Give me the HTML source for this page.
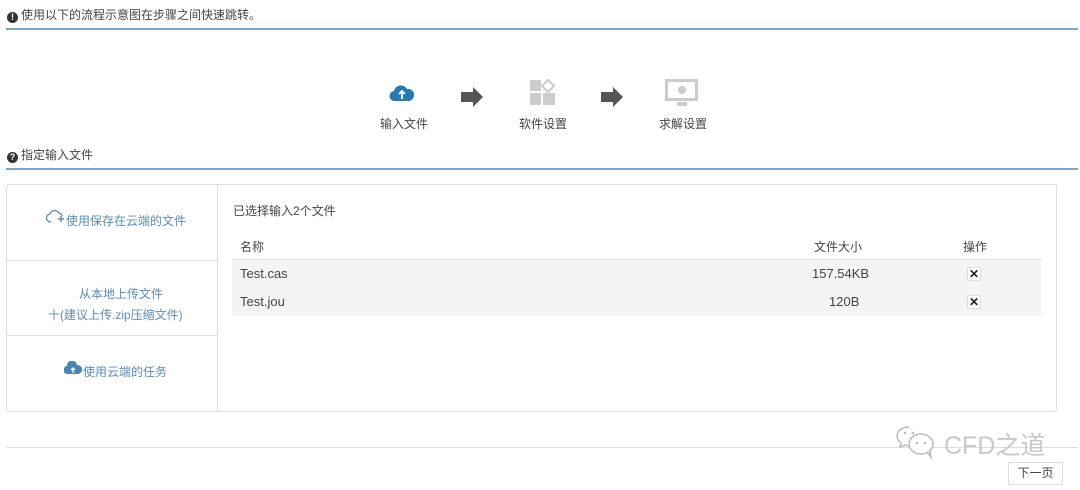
<!DOCTYPE html>
<html><head><meta charset="utf-8"><style>
*{margin:0;padding:0;box-sizing:border-box}
body{width:1080px;height:490px;background:#fff;font-family:"Liberation Sans","Noto Sans CJK SC",sans-serif;font-size:12px;color:#444;position:relative;overflow:hidden}
.a{position:absolute}
.ic{display:inline-block;width:11px;height:11px;border-radius:50%;background:#333;color:#fff;font-size:9px;line-height:11px;text-align:center;font-weight:bold;vertical-align:-1px;margin-right:3px}
.blue{color:#5b8db3}
</style></head><body>
<div class="a" style="left:7px;top:6px"><span class="ic">!</span>使用以下的流程示意图在步骤之间快速跳转。</div>
<div class="a" style="left:6px;top:28px;width:1072px;height:2px;background:#7aa7c7"></div>

<svg class="a" style="left:389px;top:82px" width="26" height="20" viewBox="0 0 26 20"><path d="M6 19a5 5 0 0 1-1-10 7 7 0 0 1 13-2 6 6 0 0 1 2 12z" fill="#2a7ab0"/><path d="M13 17V10M10 12l3-3 3 3" stroke="#fff" stroke-width="1.8" fill="none"/></svg>
<div class="a" style="left:380px;top:115px">输入文件</div>
<svg class="a" style="left:460px;top:86px" width="24" height="22"><path d="M1 6h12V1l10 10-10 10v-5H1z" fill="#555"/></svg>
<svg class="a" style="left:529px;top:79px" width="28" height="28"><rect x="1" y="1" width="11" height="11" fill="#ccc"/><rect x="1" y="14" width="11" height="12" fill="#ccc"/><rect x="14" y="14" width="12" height="12" fill="#ccc"/><path d="M19 1l6 6-6 6-6-6z" fill="none" stroke="#ccc" stroke-width="2"/></svg>
<div class="a" style="left:519px;top:115px">软件设置</div>
<svg class="a" style="left:600px;top:86px" width="24" height="22"><path d="M1 6h12V1l10 10-10 10v-5H1z" fill="#555"/></svg>
<svg class="a" style="left:665px;top:79px" width="34" height="28"><rect x="1.5" y="1.5" width="30" height="19" fill="none" stroke="#ccc" stroke-width="3"/><rect x="12" y="23" width="10" height="4" fill="#ccc"/><circle cx="17" cy="11" r="4" fill="#ccc"/></svg>
<div class="a" style="left:659px;top:115px">求解设置</div>

<div class="a" style="left:7px;top:146px"><span class="ic">?</span>指定输入文件</div>
<div class="a" style="left:6px;top:168px;width:1072px;height:2px;background:#7aa7c7"></div>

<div class="a" style="left:6px;top:184px;width:1051px;height:228px;border:1px solid #ddd;border-radius:3px"></div>
<div class="a" style="left:217px;top:185px;width:1px;height:226px;background:#ddd"></div>
<div class="a" style="left:7px;top:260px;width:210px;height:1px;background:#ddd"></div>
<div class="a" style="left:7px;top:335px;width:210px;height:1px;background:#ddd"></div>
<svg class="a" style="left:46px;top:210px" width="20" height="14"><path d="M5 12a4 4 0 0 1-1-8 5 5 0 0 1 9-1 4 4 0 0 1 3 3" fill="none" stroke="#5b8db3" stroke-width="1.3"/><path d="M12 9h6M15 6v6" stroke="#5b8db3" stroke-width="1.5"/></svg>
<div class="a blue" style="left:66px;top:212px">使用保存在云端的文件</div>
<div class="a blue" style="left:79px;top:285px">从本地上传文件</div>
<div class="a blue" style="left:48px;top:306px">十(建议上传.zip压缩文件)</div>
<svg class="a" style="left:64px;top:361px" width="18" height="14"><path d="M4 13a4 4 0 0 1-1-8 5 5 0 0 1 10-1 4 4 0 0 1 1 9z" fill="#4d86b0"/><path d="M9 12V7M7 9l2-2 2 2" stroke="#fff" stroke-width="1.3" fill="none"/></svg>
<div class="a blue" style="left:83px;top:363px">使用云端的任务</div>

<div class="a" style="left:233px;top:202px">已选择输入2个文件</div>
<div class="a" style="left:240px;top:238px">名称</div>
<div class="a" style="left:814px;top:238px">文件大小</div>
<div class="a" style="left:963px;top:238px">操作</div>
<div class="a" style="left:232px;top:259px;width:809px;height:57px;background:#f3f4f3;border-top:1px solid #ddd"></div>
<div class="a" style="left:240px;top:266px;font-size:13px">Test.cas</div>
<div class="a" style="left:812px;top:266px;font-size:13px">157.54KB</div>
<div class="a" style="left:240px;top:294px;font-size:13px">Test.jou</div>
<div class="a" style="left:829px;top:294px;font-size:13px">120B</div>
<div class="a" style="left:967px;top:267px;width:14px;height:14px;background:#fff;border:1px solid #ddd;font-size:12px;line-height:12px;text-align:center;font-weight:bold;color:#222">✕</div>
<div class="a" style="left:967px;top:295px;width:14px;height:14px;background:#fff;border:1px solid #ddd;font-size:12px;line-height:12px;text-align:center;font-weight:bold;color:#222">✕</div>

<div class="a" style="left:6px;top:447px;width:1072px;height:1px;background:#ddd"></div>
<svg class="a" style="left:893px;top:424px" width="46" height="36"><path d="M16 3c-7 0-12 4-12 9 0 3 2 5 4 7l-1 4 5-2c1 0 3 1 4 1" fill="#fff" stroke="#bbb" stroke-width="1.5"/><ellipse cx="28" cy="20" rx="12" ry="10" fill="#fff" stroke="#bbb" stroke-width="1.5"/><path d="M34 28l4 5-1-6" fill="#fff" stroke="#bbb" stroke-width="1.5"/><circle cx="12" cy="9" r="1.3" fill="#bbb"/><circle cx="20" cy="9" r="1.3" fill="#bbb"/><circle cx="24" cy="19" r="1.3" fill="#bbb"/><circle cx="32" cy="19" r="1.3" fill="#bbb"/></svg>
<div class="a" style="left:944px;top:426px;font-size:25px;color:#c8c8c8">CFD之道</div>
<div class="a" style="left:1008px;top:462px;width:55px;height:23px;border:1px solid #ddd;text-align:center;line-height:21px">下一页</div>
</body></html>
